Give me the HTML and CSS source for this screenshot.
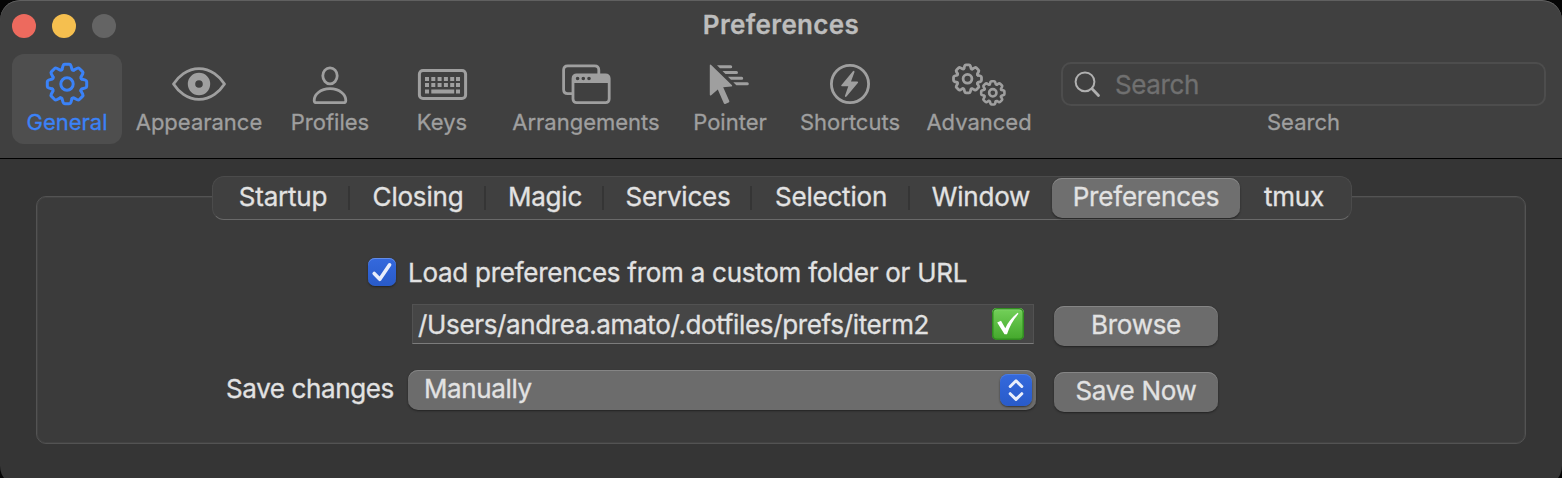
FILE: index.html
```html
<!DOCTYPE html>
<html lang="en">
<head>
<meta charset="utf-8">
<title>Preferences</title>
<link rel="stylesheet" href="styles.css">
</head>
<body>
<svg class="defs" width="0" height="0" aria-hidden="true">
  <defs>
    <path id="tooth" d="M-5 -14.6L-3.9 -18.4Q-3.5 -19.7 -2.2 -19.7H2.2Q3.5 -19.7 3.9 -18.4L5 -14.6Q5.6 -13.6 6.79 -13.86"/>
    <g id="gear">
      <use href="#tooth"/><use href="#tooth" transform="rotate(45)"/><use href="#tooth" transform="rotate(90)"/><use href="#tooth" transform="rotate(135)"/>
      <use href="#tooth" transform="rotate(180)"/><use href="#tooth" transform="rotate(225)"/><use href="#tooth" transform="rotate(270)"/><use href="#tooth" transform="rotate(315)"/>
      <circle r="6.2"/>
    </g>
  </defs>
</svg>
<div class="window">
  <header class="header">
    <div class="titlebar">
      <div class="lights"><i class="light close"></i><i class="light minimize"></i><i class="light disabled"></i></div>
      <h1 class="title">Preferences</h1>
    </div>
    <nav class="toolbar">
      <a class="tool active">
        <svg class="icon line" width="44" height="44" viewBox="-22 -22 44 44"><use href="#gear" stroke-width="3"/></svg>
        <span>General</span>
      </a>
      <a class="tool">
        <svg class="icon" width="56" height="44" viewBox="0 0 56 44"><path class="line" stroke-width="2.8" d="M2.5 22C7 15 16 6.600 28 6.600S49 15 53.500 22C49 29 40 37.400 28 37.400S7 29 2.500 22Z"/><path class="fill" fill-rule="evenodd" d="M28 10.800a11.200 11.200 0 1 0 0 22.400a11.200 11.200 0 1 0 0-22.400ZM28 18.200a3.800 3.800 0 1 1 0 7.600a3.800 3.800 0 1 1 0-7.600Z"/></svg>
        <span>Appearance</span>
      </a>
      <a class="tool">
        <svg class="icon line" width="44" height="44" viewBox="0 0 44 44" stroke-width="2.8"><ellipse cx="22" cy="13.800" rx="7.200" ry="8"/><path d="M8.500 40.700Q6.200 40.700 6.200 38.400C6.200 33 12 26.700 22 26.700S37.800 33 37.800 38.400Q37.800 40.700 35.500 40.700Z"/></svg>
        <span>Profiles</span>
      </a>
      <a class="tool">
        <svg class="icon" width="52" height="44" viewBox="0 0 52 44"><rect class="line" stroke-width="3" x="3.400" y="8.400" width="46.200" height="28.200" rx="3.600"/><path class="fill" d="M9 15h4v4H9zM15.300 15h4v4h-4zM21.600 15h4v4h-4zM27.900 15h4v4h-4zM34.200 15h4v4h-4zM40 15h4v4h-4zM9 21h4v4H9zM15.300 21h4v4h-4zM21.600 21h4v4h-4zM27.900 21h4v4h-4zM34.200 21h4v4h-4zM40 21h4v4h-4zM9 27.500h4v4H9zM15.300 27.500h22.900v4H15.300zM40 27.500h4v4h-4z"/></svg>
        <span>Keys</span>
      </a>
      <a class="tool">
        <svg class="icon" width="52" height="44" viewBox="0 0 52 44"><path class="line butt" stroke-width="2.800" d="M12 31.700H7.800Q3.600 31.700 3.600 27.500V8Q3.600 3.800 7.800 3.800H34.600Q38.800 3.800 38.800 8V12"/><rect class="line" stroke-width="2.800" x="13" y="12.900" width="36.200" height="27.800" rx="3.600"/><path class="fill" fill-rule="evenodd" d="M12 21V16Q12 12 16 12H46Q50 12 50 16V21ZM17.600 14.700a1.800 1.800 0 1 0 0 3.600a1.800 1.800 0 1 0 0-3.600ZM23.300 14.700a1.800 1.800 0 1 0 0 3.600a1.800 1.800 0 1 0 0-3.600ZM29 14.700a1.800 1.800 0 1 0 0 3.600a1.800 1.800 0 1 0 0-3.600Z"/></svg>
        <span>Arrangements</span>
      </a>
      <a class="tool">
        <svg class="icon" width="44" height="44" viewBox="0 0 44 44"><path class="fill" d="M1.800 3.500Q1.800 1.800 3.200 3L24 23.300Q24.700 24.500 23.300 24.500L15.200 25.200L21.300 39Q21.600 40.100 20.600 40.500L17.300 42Q16.200 42.300 15.800 41.300L9.800 27.500L3.200 33.200Q1.800 34.100 1.800 32.400Z"/><path class="fill" d="M9 3.300H22.700a1.500 1.500 0 0 1 0 3H12ZM14.500 9H28.500a1.500 1.500 0 0 1 0 3H17.500ZM20 14.800H33.700a1.500 1.500 0 0 1 0 3H23ZM25.300 20.300H39.300a1.500 1.500 0 0 1 0 3H28.300Z"/></svg>
        <span>Pointer</span>
      </a>
      <a class="tool">
        <svg class="icon" width="44" height="44" viewBox="0 0 44 44"><circle class="line" stroke-width="2.800" cx="22" cy="22" r="18.600"/><path class="fill" d="M24.900 9.300L13.300 23.200Q12.900 24.300 14 24.300H20.300L16.900 34.100Q17.100 35.500 18.500 34.600L30 20.700Q30.600 19.600 29.300 19.400H23L26.500 9.900Q26.300 8.200 24.900 9.300Z"/></svg>
        <span>Shortcuts</span>
      </a>
      <a class="tool">
        <svg class="icon line" width="56" height="44" viewBox="0 0 56 44"><g transform="translate(16.500 16.800) scale(.71)"><use href="#gear" stroke-width="3.900"/></g><g transform="translate(41.800 30.800) scale(.59)"><use href="#gear" stroke-width="4.400"/></g></svg>
        <span>Advanced</span>
      </a>
      <div class="search">
        <div class="search-field">
          <svg class="line" width="28" height="28" viewBox="0 0 28 28"><circle cx="11" cy="11.800" r="9.400" stroke-width="2"/><path d="M18 18.800L24.500 25.500" stroke-width="2.800"/></svg>
          <span>Search</span>
        </div>
        <span class="search-label">Search</span>
      </div>
    </nav>
  </header>
  <main class="content">
    <div class="tabs">
      <span class="tab">Startup</span><span class="tab">Closing</span><span class="tab">Magic</span><span class="tab">Services</span><span class="tab">Selection</span><span class="tab last">Window</span><span class="tab selected">Preferences</span><span class="tab last">tmux</span>
    </div>
    <section class="panel">
      <div class="load-row">
        <span class="checkbox"><svg width="28" height="28" viewBox="0 0 28 28"><path d="M6.200 15.500L11.800 21.300L21.600 6.800"/></svg></span>
        <span class="load-label">Load preferences from a custom folder or URL</span>
      </div>
      <div class="path-row">
        <div class="path-field">
          <span class="path-text">/Users/andrea.amato/.dotfiles/prefs/iterm2</span>
          <span class="valid"><svg width="32" height="32" viewBox="0 0 32 32"><path d="M5.200 14.600L9 12.800L13.300 20.200C16 14.500 19.500 9.500 25.600 4.700L26.500 5.800C21.500 11.500 17.500 18 15 26.300H12.500Z"/></svg></span>
        </div>
        <button class="button">Browse</button>
      </div>
      <div class="save-row">
        <span class="save-label">Save changes</span>
        <div class="select"><span>Manually</span><span class="stepper"><svg width="32" height="32" viewBox="0 0 32 32"><path d="M10.200 12.500L16 6.800L21.800 12.500M10.200 19.700L16 25.400L21.800 19.700"/></svg></span></div>
        <button class="button">Save Now</button>
      </div>
    </section>
  </main>
</div>
</body>
</html>
```
FILE: styles.css
```css
* { box-sizing: border-box; }
html, body { margin: 0; height: 478px; overflow: hidden; background: #050505; }
body { font-family: Inter, "Liberation Sans", sans-serif; font-size: 26px; color: #e2e2e2; -webkit-text-stroke: .3px currentColor; }
.defs { display: block; height: 0; }
.window { height: 486px; border-radius: 20px; overflow: hidden; background: #353535; }
.header { height: 159px; background: #404040; border-bottom: 1px solid #000; border-radius: 20px 20px 0 0; box-shadow: inset 0 1px 0 #606060; }
.titlebar { height: 54px; display: grid; grid-template-columns: 140px 1fr 140px; align-items: center; padding-bottom: 2px; }
.lights { display: flex; gap: 16px; padding-left: 12px; }
.light { width: 24px; height: 24px; border-radius: 50%; }
.close { background: #ed6a5e; }
.minimize { background: #f5bf4f; }
.disabled { background: #646464; }
.title { margin: 0; padding-bottom: 2px; font-size: 26px; font-weight: 600; line-height: 32px; text-align: center; letter-spacing: .35px; color: #bdbdbd; }
.toolbar { display: grid; grid-template-columns: 110px 154px 108px 116px 172px 116px 124px 134px 500px; margin-left: 12px; color: #9f9f9f; font-size: 22px; }
.tool { height: 90px; padding-top: 8px; display: flex; flex-direction: column; align-items: center; border-radius: 12px; line-height: 28px; }
.tool span { margin-top: 2px; }
.active { background: #4e4e4e; color: #3b82f7; }
.icon { display: block; }
.line { fill: none; stroke: currentColor; stroke-linecap: round; stroke-linejoin: round; }
.line.butt { stroke-linecap: butt; }
.fill { fill: currentColor; }
.search { margin-left: 15px; width: 485px; padding-top: 8px; display: flex; flex-direction: column; line-height: 28px; text-align: center; }
.search-field { height: 44px; display: flex; align-items: center; padding-left: 11px; border: 2px solid #4d4d4d; border-radius: 10px; font-size: 26px; letter-spacing: -.4px; color: #707070; }
.search-field svg { color: #b0b0b0; }
.search-field span { margin-left: 13px; padding-top: 2px; }
.search-label { margin-top: 2px; }
.content { padding: 17px 36px 0; }
.tabs { position: relative; z-index: 1; width: 1140px; height: 44px; margin-left: 176px; display: grid; grid-template-columns: 134px 136px 118px 148px 158px 142px 188px 108px; padding: 1px 3px; border: 1px solid #4b4b4b; border-bottom-color: #696969; border-radius: 12px; background: #404040; }
.tab { display: flex; align-items: center; justify-content: center; height: 40px; padding-bottom: 2px; line-height: 38px; letter-spacing: -.2px; background: linear-gradient(#353535, #353535) right center / 2px 24px no-repeat; }
.tab.last { background: none; }
.tab.selected { background: #6f6f6f; border-radius: 10px; box-shadow: inset 0 1px 0 #8a8a8a, 0 1px 2px #222; }
.panel { height: 248px; margin-top: -24px; padding: 1px; border: 1px solid #535353; border-radius: 10px; background: #3b3b3b; box-shadow: inset 0 0 0 1px #434343; }
.load-row { display: flex; align-items: center; height: 32px; margin: 58px 0 0 330px; gap: 12px; }
.load-label { letter-spacing: -.26px; }
.checkbox { width: 28px; height: 28px; border-radius: 7px; background: linear-gradient(#3469dd, #295bc9); box-shadow: inset 0 1px 0 #638ce8, 0 1px 2px #222; }
.checkbox svg, .valid svg, .stepper svg { display: block; fill: none; stroke: #e9eefb; stroke-width: 3.6; stroke-linecap: round; stroke-linejoin: round; }
.path-row { display: flex; margin: 16px 0 0 374px; gap: 20px; }
.path-field { width: 622px; height: 40px; display: flex; align-items: center; justify-content: space-between; padding: 0 9px 0 5px; border: 1px solid #525252; border-bottom: 1px solid #7c7c7c; background: #464646; }
.path-text { padding-top: 1px; letter-spacing: -.35px; }
.valid { width: 32px; height: 32px; border-radius: 5px; background: linear-gradient(#74d15a, #43a72b); box-shadow: inset 0 0 0 1.5px #318d20, inset 0 2px 1px #a5e593; }
.valid svg { fill: #fff; stroke: none; }
.button { width: 164px; height: 40px; padding: 0 0 3px; border: 0; border-radius: 10px; font: inherit; letter-spacing: -.3px; color: inherit; background: #6c6c6c; box-shadow: inset 0 1px 0 #858585, 0 1px 2px #222; -webkit-text-stroke: inherit; }
.path-row .button { margin-top: 2px; }
.save-row { display: flex; align-items: flex-start; margin: 24px 0 0 188px; line-height: 38px; letter-spacing: -.38px; }
.save-label { width: 182px; }
.select { width: 628px; height: 40px; display: flex; justify-content: space-between; padding: 0 4px 0 16px; border-radius: 10px; background: #6c6c6c; box-shadow: inset 0 1px 0 #858585, 0 1px 2px #222; }
.stepper { width: 32px; height: 32px; margin-top: 4px; border-radius: 8px; background: linear-gradient(#3469dd, #295bc9); box-shadow: inset 0 1px 0 #4c7ce2, 0 1px 2px #333; }
.stepper svg { stroke-width: 3; }
.save-row .button { margin: 2px 0 0 18px; }
```
